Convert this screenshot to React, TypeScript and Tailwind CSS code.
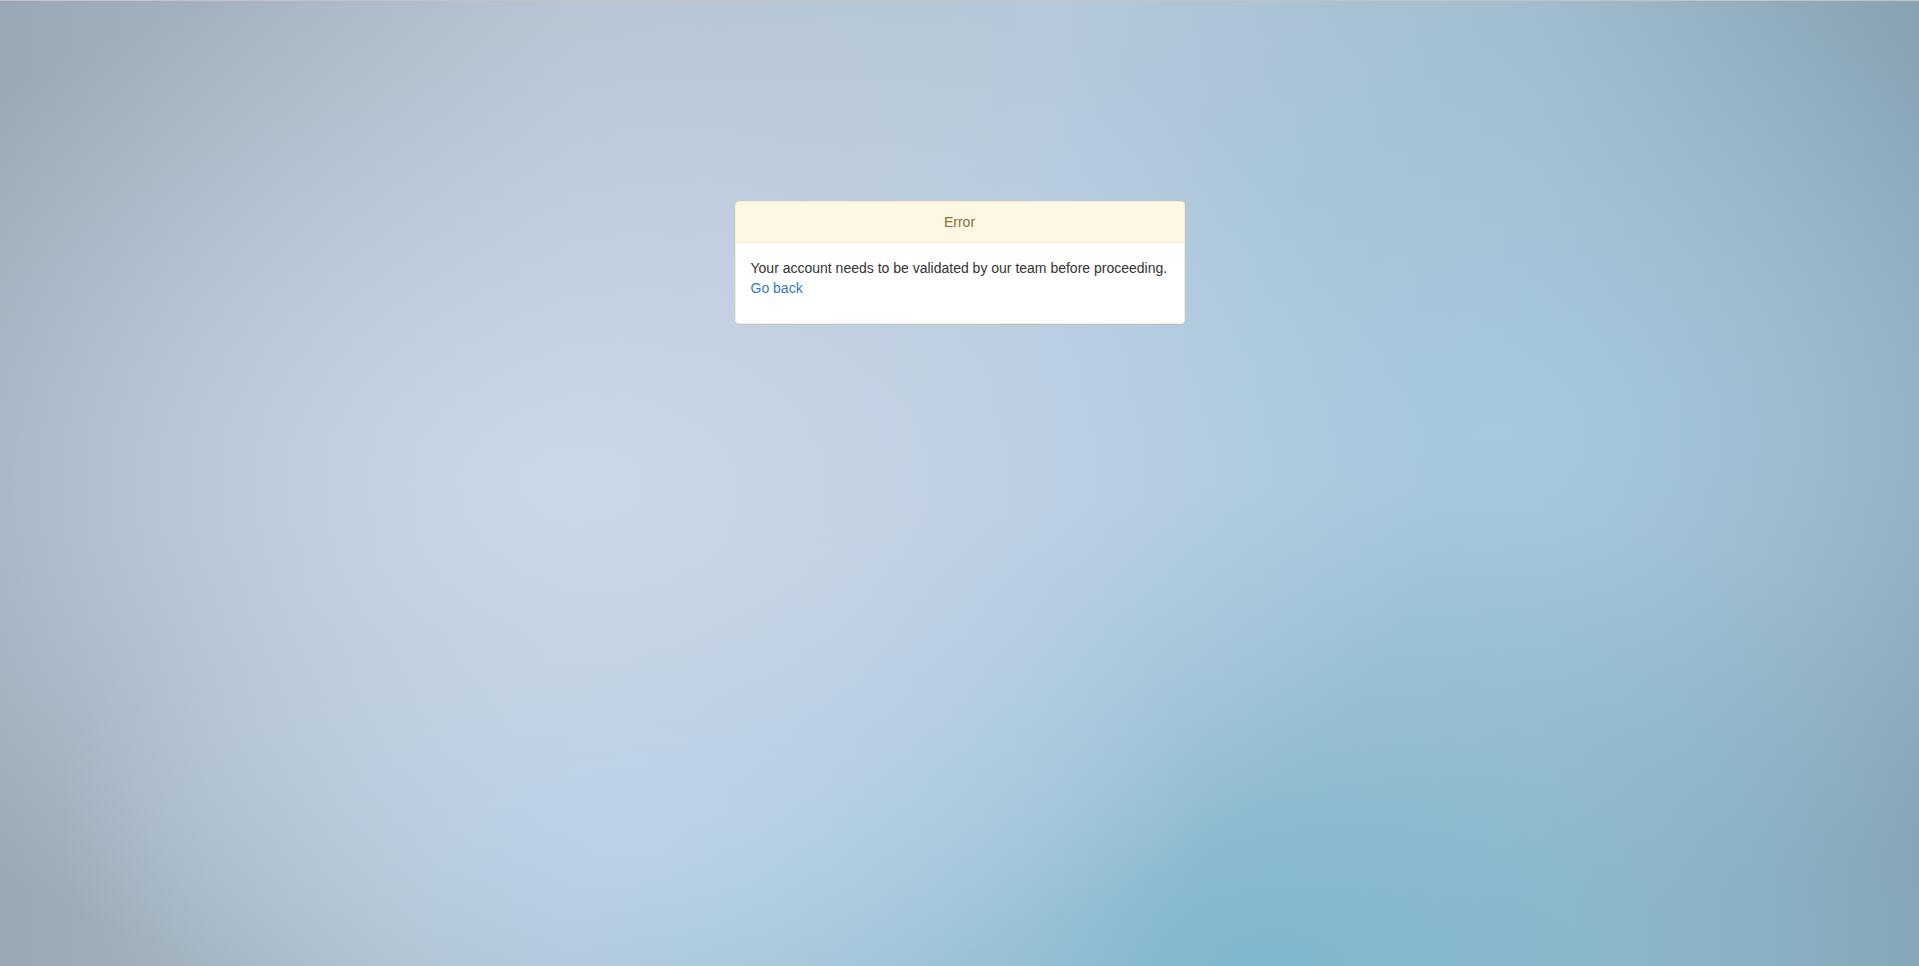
import React from "react";

export default function App() {
  return (
    <div
      className="min-h-[966px] h-[966px] w-full overflow-hidden border-t border-[#c4c4c4] bg-[radial-gradient(ellipse_45%_55%_at_30%_50%,rgba(203,216,234,1)_0%,rgba(203,216,234,0)_100%),radial-gradient(ellipse_30%_35%_at_33%_85%,rgba(180,212,232,0.8)_0%,rgba(180,212,232,0)_100%),radial-gradient(ellipse_45%_50%_at_66%_100%,rgba(125,182,206,0.95)_0%,rgba(125,182,206,0)_100%),radial-gradient(ellipse_40%_50%_at_78%_45%,rgba(166,202,224,0.9)_0%,rgba(166,202,224,0)_100%),linear-gradient(90deg,#98a8b4_0%,#b6c3d1_30%,#b5c9da_55%,#9fbccd_80%,#87a2b1_100%)] font-['Liberation_Sans',Arial,sans-serif]"
    >
      <div className="mx-auto mt-[200px] w-[450px] rounded-[4px] border border-[#faebcc] bg-white shadow-[0_1px_1px_rgba(0,0,0,0.05)]">
        <div className="rounded-t-[3px] border-b border-[#faebcc] bg-[#fcf8e3] px-[15px] py-[10px] text-center text-[14px] leading-[20px] text-[#8a6d3b]">
          Error
        </div>
        <div className="p-[15px] text-[14px] leading-[20px] text-[#333333]">
          <p className="mb-[10px]">
            Your account needs to be validated by our team before proceeding.
            <br />
            <a href="#" className="text-[#337ab7]">
              Go back
            </a>
          </p>
        </div>
      </div>
    </div>
  );
}
